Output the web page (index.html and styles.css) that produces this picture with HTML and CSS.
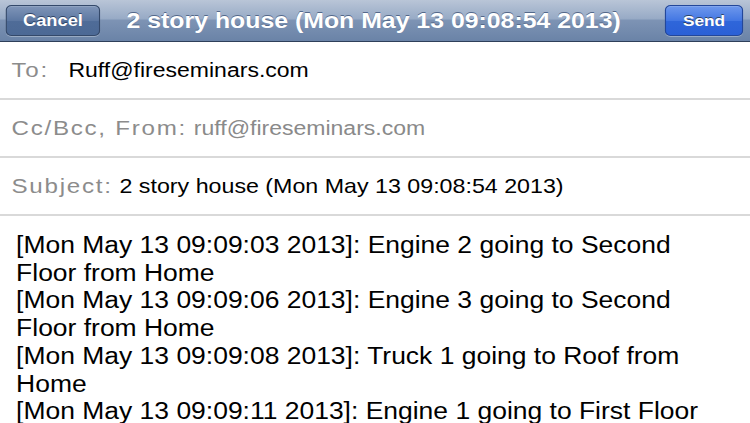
FILE: index.html
```html
<!DOCTYPE html>
<html>
    <head>
        <link rel="stylesheet" href="styles.css">
    </head>
    <body>
        <div class="screen">
            <div class="navbar">
                <button class="btn cancel">Cancel</button>
                <h1 class="title">2 story house (Mon May 13 09:08:54 2013)</h1>
                <button class="btn send">Send</button>
            </div>
            <div class="field">
                <span class="label">To:</span>
                <span class="value to">Ruff@fireseminars.com</span>
            </div>
            <div class="field">
                <span class="label">Cc/Bcc, From:</span>
                <span class="value from">ruff@fireseminars.com</span>
            </div>
            <div class="field">
                <span class="label">Subject:</span>
                <span class="value subject">2 story house (Mon May 13 09:08:54 2013)</span>
            </div>
            <div class="message">
                <p>[Mon May 13 09:09:03 2013]: Engine 2 going to Second Floor from Home</p>
                <p>[Mon May 13 09:09:06 2013]: Engine 3 going to Second Floor from Home</p>
                <p>[Mon May 13 09:09:08 2013]: Truck 1 going to Roof from Home</p>
                <p>[Mon May 13 09:09:11 2013]: Engine 1 going to First Floor from Home</p>
            </div>
        </div>
    </body>
</html>
```

FILE: styles.css
```css
body{
    margin:0;
    background-color:#fff;
    font-family:"Liberation Sans", Arial, sans-serif;
    overflow:hidden;
    height:423px;
}

/* the whole screen is drawn a bit wide, like the phone shot */
.screen{
    width:652px;
    transform:scaleX(1.1503);
    transform-origin:0 0;
}

.navbar{
    height:41px;
    display:flex;
    align-items:center;
    padding:0 6px 0 5px;
    background:linear-gradient(#b9c5d7 0%, #98abc6 45%, #7d93b4 50%, #6a83a7 100%);
    border-bottom:1px solid #2e3f5a;
}

.title{
    flex:1;
    margin:0 0 0 23px;
    color:#fff;
    font-size:21.6px;
    font-weight:bold;
    text-shadow:0 -1px 0 #53688a;
    white-space:nowrap;
}

.btn{
    height:31px;
    padding:0;
    border:1px solid #34496a;
    border-radius:5px;
    color:#fff;
    font-family:"Liberation Sans", Arial, sans-serif;
    font-weight:bold;
    text-shadow:0 -1px 0 #2f4466;
    box-shadow:0 1px 0 rgba(255,255,255,0.3), inset 0 1px 0 rgba(255,255,255,0.15);
}

.cancel{
    width:82px;
    font-size:15.9px;
    background:linear-gradient(#7f95b8, #5d78a2 50%, #4f6c98 51%, #4c6995);
}

.send{
    width:68px;
    font-size:15px;
    border-color:#23479a;
    background:linear-gradient(#6e98ec, #4377e3 50%, #2f66da 51%, #2b60d6);
}

.field{
    height:56px;
    display:flex;
    align-items:center;
    padding-left:10px;
    border-bottom:2px solid #d9d9d9;
}

.label{
    color:#8c8c8c;
    font-size:21px;
    letter-spacing:1.5px;
}

.value{
    font-size:20px;
}

.to{
    margin-left:17px;
    color:#000;
}

.from{
    margin-left:6px;
    color:#8a8a8a;
}

.subject{
    margin-left:6px;
    color:#000;
    font-size:20.2px;
}

.message{
    padding:16px 20px 0 14px;
    font-size:23px;
    line-height:27.7px;
    color:#000;
}

.message p{
    margin:0;
}
```
